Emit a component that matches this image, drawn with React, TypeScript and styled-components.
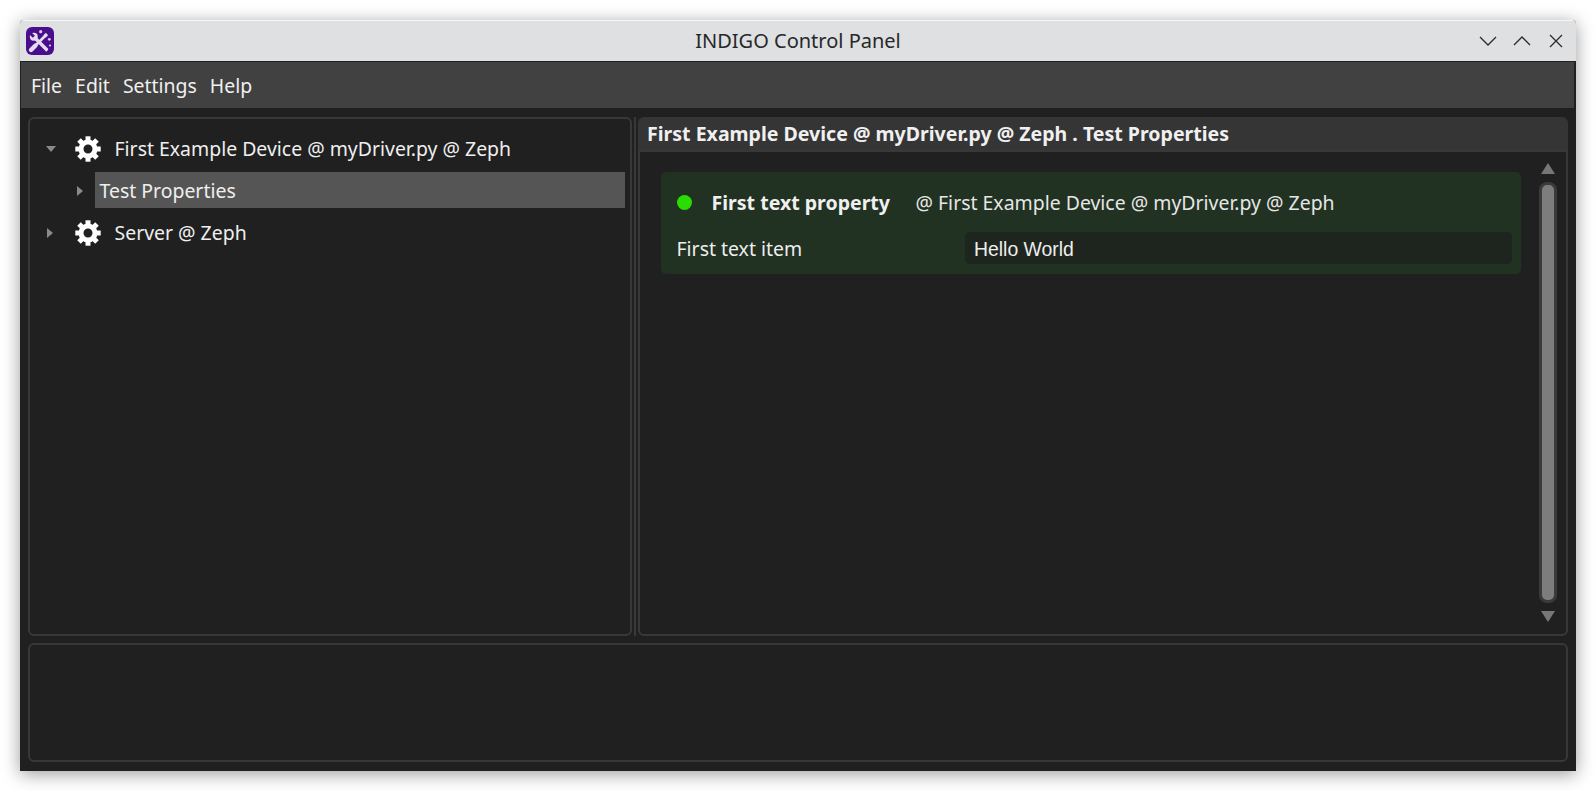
import React from 'react';
import styled, { createGlobalStyle } from 'styled-components';

const GlobalStyle = createGlobalStyle`
  html, body {
    margin: 0;
    padding: 0;
    background: #fff;
  }
  * {
    box-sizing: border-box;
  }
`;

const menuItems = ['File', 'Edit', 'Settings', 'Help'];

const Logo = () => (
  <LogoBox>
    <svg width="28" height="28" viewBox="0 0 28 28" fill="none">
      <path d="M9 11 21.5 23.5" stroke="#e4deec" strokeWidth="3.4" />
      <circle cx="7.8" cy="9.8" r="4" fill="#e4deec" />
      <path d="M7.8 9.8 4 6" stroke="#4a0e8c" strokeWidth="3" />
      <path d="M23.6 25 22.4 22.4 25 23.6" stroke="#4a0e8c" strokeWidth="1" />
      <path d="M19.5 8.5 8.5 19.5" stroke="#e4deec" strokeWidth="2.6" />
      <path d="M9.5 18.5 5 23" stroke="#e4deec" strokeWidth="4.4" strokeLinecap="round" />
      <path d="M18.5 9.5 21 7" stroke="#e4deec" strokeWidth="3.2" />
      <circle cx="14.7" cy="4.7" r="1.6" fill="#d8cfe6" />
      <circle cx="23.3" cy="12.3" r="1.4" fill="#d8cfe6" />
      <circle cx="24" cy="18.5" r="1.1" fill="#d8cfe6" />
    </svg>
  </LogoBox>
);

const ChevronDown = () => (
  <svg width="18" height="10" viewBox="0 0 18 10" fill="none">
    <path d="M1 1 9 9 17 1" stroke="#2a2b2c" strokeWidth="1.3" />
  </svg>
);

const ChevronUp = () => (
  <svg width="18" height="10" viewBox="0 0 18 10" fill="none">
    <path d="M1 9 9 1 17 9" stroke="#2a2b2c" strokeWidth="1.3" />
  </svg>
);

const CloseIcon = () => (
  <svg width="14" height="14" viewBox="0 0 14 14" fill="none">
    <path d="M1 1 13 13M13 1 1 13" stroke="#2a2b2c" strokeWidth="1.3" />
  </svg>
);

const Gear = () => (
  <svg width="26" height="26" viewBox="0 0 26 26">
    <g fill="#fff">
      {[0, 45, 90, 135, 180, 225, 270, 315].map((a) => (
        <rect key={a} x="10.5" y="0.3" width="5" height="6" transform={`rotate(${a} 13 13)`} />
      ))}
    </g>
    <circle cx="13" cy="13" r="7" fill="none" stroke="#fff" strokeWidth="5" />
  </svg>
);

const Arrow = styled.span<{ $open?: boolean }>`
  width: 0;
  height: 0;
  flex: none;
  ${({ $open }) =>
    $open
      ? `
    border-left: 5px solid transparent;
    border-right: 5px solid transparent;
    border-top: 6px solid #8a8a8a;
  `
      : `
    border-top: 5px solid transparent;
    border-bottom: 5px solid transparent;
    border-left: 6px solid #8a8a8a;
  `}
`;

export default function App() {
  return (
    <Desktop>
      <GlobalStyle />
      <Window>
        <TitleBar>
          <Logo />
          <Title>INDIGO Control Panel</Title>
          <WindowControls>
            <ControlButton>
              <ChevronDown />
            </ControlButton>
            <ControlButton>
              <ChevronUp />
            </ControlButton>
            <ControlButton>
              <CloseIcon />
            </ControlButton>
          </WindowControls>
        </TitleBar>
        <MenuBar>
          {menuItems.map((m) => (
            <MenuItem key={m}>{m}</MenuItem>
          ))}
        </MenuBar>
        <Content>
          <MainRow>
            <TreePanel>
              <TreeRow>
                <ArrowSlot $width={44.5} $indent={15.5}>
                  <Arrow $open />
                </ArrowSlot>
                <GearSlot>
                  <Gear />
                </GearSlot>
                <TreeLabel>First Example Device @ myDriver.py @ Zeph</TreeLabel>
              </TreeRow>
              <GroupRow>
                <GroupArrowSlot $width={64.5} $indent={47}>
                  <Arrow />
                </GroupArrowSlot>
                <SelectedLabel>Test Properties</SelectedLabel>
              </GroupRow>
              <TreeRow>
                <ArrowSlot $width={44.5} $indent={16.5}>
                  <Arrow />
                </ArrowSlot>
                <GearSlot>
                  <Gear />
                </GearSlot>
                <TreeLabel>Server @ Zeph</TreeLabel>
              </TreeRow>
            </TreePanel>
            <Splitter />
            <PropertiesPanel>
              <PanelHeader>First Example Device @ myDriver.py @ Zeph . Test Properties</PanelHeader>
              <PanelBody>
                <PropertyList>
                  <PropertyCard>
                    <PropertyHead>
                      <StatusDot />
                      <PropertyName>First text property</PropertyName>
                      <PropertySource>@ First Example Device @ myDriver.py @ Zeph</PropertySource>
                    </PropertyHead>
                    <PropertyItem>
                      <ItemLabel>First text item</ItemLabel>
                      <ItemValue>Hello World</ItemValue>
                    </PropertyItem>
                  </PropertyCard>
                </PropertyList>
                <ScrollBar>
                  <ScrollUp />
                  <ScrollThumb />
                  <ScrollDown />
                </ScrollBar>
              </PanelBody>
            </PropertiesPanel>
          </MainRow>
          <LogPanel />
        </Content>
      </Window>
    </Desktop>
  );
}

const Desktop = styled.div`
  width: 1596px;
  height: 791px;
  padding: 20px;
  background: #fff;
  overflow: hidden;
  font-family: 'Noto Sans', sans-serif;
`;

const Window = styled.div`
  width: 1556px;
  height: 751px;
  display: flex;
  flex-direction: column;
  background: #202020;
  box-shadow: 0 3px 18px rgba(0, 0, 0, 0.4);
  border-radius: 4px 4px 0 0;
`;

const TitleBar = styled.div`
  position: relative;
  height: 41px;
  flex: none;
  display: flex;
  align-items: center;
  padding-left: 6px;
  background: #dee0e2;
  border-top: 1px solid #f4f5f5;
  border-radius: 4px 4px 0 0;
`;

const LogoBox = styled.div`
  width: 28px;
  height: 28px;
  flex: none;
  background: #4a0e8c;
  border-radius: 6px;
`;

const Title = styled.div`
  position: absolute;
  left: 0;
  right: 0;
  top: 6px;
  text-align: center;
  font-size: 20px;
  line-height: 27px;
  color: #27282a;
`;

const WindowControls = styled.div`
  margin-left: auto;
  display: flex;
  align-items: center;
  margin-right: 3px;
`;

const ControlButton = styled.div`
  width: 34px;
  height: 28px;
  display: flex;
  align-items: center;
  justify-content: center;
`;

const MenuBar = styled.div`
  height: 46px;
  flex: none;
  display: flex;
  align-items: center;
  gap: 13px;
  margin: 1px 2px 0 1px;
  padding: 1px 0 0 10px;
  background: #414141;
`;

const MenuItem = styled.div`
  font-size: 19.45px;
  line-height: 27px;
  color: #f0f0f0;
`;

const Content = styled.div`
  flex: 1;
  min-height: 0;
  display: flex;
  flex-direction: column;
  gap: 7px;
  padding: 9px 8px 9px;
`;

const MainRow = styled.div`
  height: 519px;
  flex: none;
  display: flex;
`;

const TreePanel = styled.div`
  width: 604px;
  flex: none;
  padding-top: 12px;
  border: 2px solid #383838;
  border-radius: 6px;
`;

const TreeRow = styled.div`
  height: 35px;
  display: flex;
  align-items: center;
`;

const GroupRow = styled(TreeRow)`
  height: 36px;
  margin: 6px 0 7px;
`;

const ArrowSlot = styled.div<{ $width: number; $indent: number }>`
  width: ${({ $width }) => $width}px;
  flex: none;
  display: flex;
  padding-left: ${({ $indent }) => $indent}px;
`;

const GroupArrowSlot = styled(ArrowSlot)`
  margin-top: 2px;
`;

const GearSlot = styled.div`
  width: 40px;
  flex: none;
  display: flex;
  align-items: center;
`;

const TreeLabel = styled.div`
  font-size: 19.45px;
  line-height: 27px;
  color: #efefef;
`;

const SelectedLabel = styled.div`
  width: 530px;
  height: 36px;
  padding: 1px 0 0 5px;
  font-size: 19.45px;
  line-height: 35px;
  color: #efefef;
  background: #555;
`;

const Splitter = styled.div`
  width: 6px;
  flex: none;
  display: flex;
  justify-content: center;

  &::before {
    content: '';
    width: 2px;
    background: #383838;
  }
`;

const PropertiesPanel = styled.div`
  flex: 1;
  min-width: 0;
  display: flex;
  flex-direction: column;
`;

const PanelHeader = styled.div`
  height: 33px;
  flex: none;
  padding-left: 9px;
  font-size: 19.55px;
  font-weight: 700;
  line-height: 33px;
  color: #f0f0f0;
  background: #353535;
  border-radius: 6px 6px 0 0;
`;

const PanelBody = styled.div`
  flex: 1;
  min-height: 0;
  display: flex;
  padding: 19.5px 0 0 21px;
  border: 2px solid #383838;
  border-radius: 0 0 6px 6px;
`;

const PropertyList = styled.div`
  flex: 1;
  min-width: 0;
  padding-right: 9px;
`;

const PropertyCard = styled.div`
  height: 102px;
  padding: 0 9px 0 15.5px;
  background: #213122;
  border-radius: 5px;
`;

const PropertyHead = styled.div`
  height: 60px;
  padding-top: 2px;
  display: flex;
  align-items: center;
`;

const StatusDot = styled.span`
  width: 15px;
  height: 15px;
  flex: none;
  margin-right: 20px;
  border-radius: 50%;
  background: #2bdc00;
`;

const PropertyName = styled.span`
  width: 204px;
  flex: none;
  font-size: 19.55px;
  font-weight: 700;
  color: #f0f0f0;
`;

const PropertySource = styled.span`
  font-size: 19.45px;
  color: #e6e6e6;
`;

const PropertyItem = styled.div`
  display: flex;
  align-items: center;
`;

const ItemLabel = styled.span`
  width: 288px;
  flex: none;
  padding-top: 2px;
  font-size: 19.45px;
  color: #eee;
`;

const ItemValue = styled.div`
  flex: 1;
  height: 32px;
  padding-left: 9.5px;
  font-family: 'Liberation Sans', sans-serif;
  font-size: 19.4px;
  line-height: 34px;
  color: #eee;
  background: #1e251e;
  border-radius: 5px;
`;

const ScrollBar = styled.div`
  width: 36px;
  flex: none;
  display: flex;
  flex-direction: column;
  align-items: center;
  margin-top: -8.5px;
  padding-bottom: 12px;
`;

const ScrollUp = styled.span`
  width: 0;
  height: 0;
  flex: none;
  border-left: 7px solid transparent;
  border-right: 7px solid transparent;
  border-bottom: 11px solid #777;
`;

const ScrollDown = styled.span`
  width: 0;
  height: 0;
  flex: none;
  border-left: 7px solid transparent;
  border-right: 7px solid transparent;
  border-top: 11px solid #777;
`;

const ScrollThumb = styled.div`
  width: 18px;
  flex: 1;
  margin: 8px 0;
  background: #7d7d7d;
  border: 3px solid #3a3a3a;
  border-radius: 8px;
`;

const LogPanel = styled.div`
  flex: 1;
  min-height: 0;
  border: 2px solid #383838;
  border-radius: 6px;
`;
